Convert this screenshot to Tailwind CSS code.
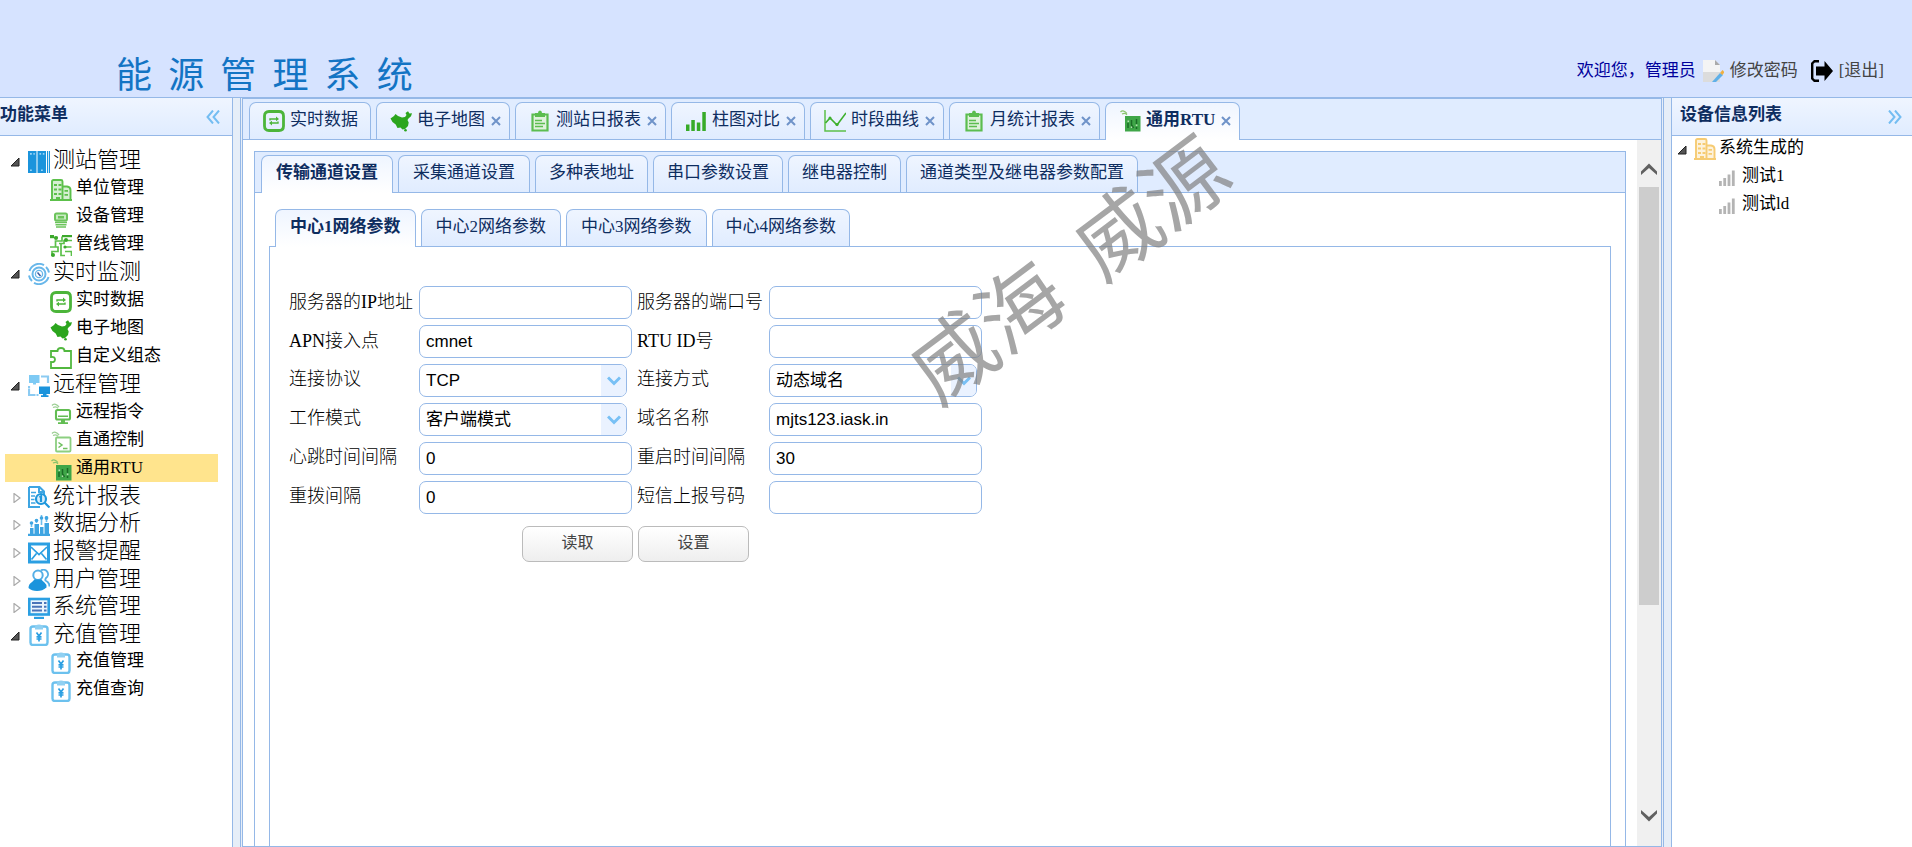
<!DOCTYPE html>
<html lang="zh-CN">
<head>
<meta charset="utf-8">
<title>能源管理系统</title>
<script src="https://cdn.jsdelivr.net/npm/@tailwindcss/browser@4"></script>
</head>
<body class="font-['Liberation_Serif','Noto_Sans_CJK_SC',serif] text-[17px] leading-[28px] text-black bg-white">

<svg class="hidden" aria-hidden="true">
  <symbol id="i-books" viewBox="0 0 22 22"><path fill="#1b94dc" d="M0 0h8.500v22H0zM9.500 0H18v22H9.500zM19 0h1v22h-1zM20.800 0H22v22h-1.200z"/><path fill="#9ad4f6" d="M2 2h1.800v1.800H2zM5.400 2h1.400v1.800H5.400zM2 18.500h1.800v1.500H2zM11.500 2h1.600v1.800h-1.600zM14.800 2h1.600v1.800h-1.600zM13 18.500h1.800v1.500H13z"/></symbol>
  <symbol id="i-building" viewBox="0 0 22 22"><path fill="currentColor" fill-opacity=".25" d="M2 1h10.500v20H2zM12.500 7.500h8V21h-8z"/><g fill="none" stroke="currentColor" stroke-width="1.900"><path d="M2 21V2.500Q2 1 3.500 1H11Q12.500 1 12.500 2.500V21M12.500 7.500H17Q20.500 8 20.500 11V21M0 21h22"/></g><path fill="currentColor" d="M4 5h3v2H4zM8.500 5h3v2h-3zM4 9.500h3v2H4zM8.500 9.500h3v2h-3zM4 14h3v2H4zM8.500 14h3v2h-3zM14.500 11h3.500v1.800h-3.500zM14.500 15h3.500v1.800h-3.500zM6 18h4v3H6z"/></symbol>
  <symbol id="i-device" viewBox="0 0 22 22"><rect x="5" y="6.500" width="12" height="7" rx="1.500" fill="#c9ebc2" stroke="#6cc45c" stroke-width="2"/><path fill="#6cc45c" d="M8 9h6v2.500H8zM5 14.600h12v1.700H5zM5.500 17h11v1.600h-11zM6 19.200h10v1.500H6z"/></symbol>
  <symbol id="i-pipe" viewBox="0 0 22 22"><g fill="none" stroke="#5cc04a" stroke-width="1.700"><path d="M0 2.500h8M12 1.500h10M12 1.500V6H5.500v6M9 8.500h5v-3h8M0 12h8v4.500H2V21M11 9v11.500h4M14 12h7.500M15 16.500h6.500V21"/></g><g fill="#3ca82c"><circle cx="6" cy="3" r="2"/><circle cx="16" cy="5" r="2"/><circle cx="3" cy="20" r="2"/><circle cx="15" cy="12" r="1.600"/><path d="M12 0h10v2H12zM0 0h4v3H0z"/></g></symbol>
  <symbol id="i-monitor" viewBox="0 0 22 22"><g fill="none" stroke="#68b7ea"><circle cx="11" cy="11" r="6.500" stroke-width="2"/><circle cx="11" cy="11" r="3.600" stroke-width="1.300"/><path stroke-width="2" d="M1.500 8A10 10 0 0 1 16 2.200M20.500 14A10 10 0 0 1 6 19.800M1 12.500a10 10 0 0 0 3 5.500M21 9.500A10 10 0 0 0 18 4"/></g><path d="M9.500 9.500l3 3.500" stroke="#3d5b9e" stroke-width="1.500"/></symbol>
  <symbol id="i-data" viewBox="0 0 22 22"><path d="M6 1.500h10q4.500 0 4.500 4.500v10q0 4.500-4.500 4.500H6q-4.500 0-4.500-4.500V6Q1.500 1.500 6 1.500z" fill="none" stroke="#4cb53a" stroke-width="2.800" stroke-linejoin="round"/><g fill="none" stroke="#4cb53a" stroke-width="1.400"><path d="M7 10.500V9h7M15 11.500V13H8"/></g><path fill="#4cb53a" d="M13 6.500l3 2.500-3 2.300zM9 10.700V15.500L6 13z"/></symbol>
  <symbol id="i-map" viewBox="0 0 22 22"><path fill="#2ba51d" d="M.5 8.500L4 6l1.500-2L8 6l4 1.500 3-.5 1.500-2L15.500 3 18 1.200l1.500 2.300 2.500-.3-1 3-2.500 2.300-1 1.500 1.200 2.500-.7 3.500-3 3-2.500.5-2-2-3 .5-1.800-3.500L2.500 12z"/><circle cx="15.500" cy="20.300" r="1.300" fill="#2ba51d"/></symbol>
  <symbol id="i-puzzle" viewBox="0 0 22 22"><path d="M1 4h6.500Q7.500 1 11 1t3.500 3H21v17H1v-6q4 .5 4-2.500T1 10z" fill="none" stroke="#52b83f" stroke-width="1.800"/></symbol>
  <symbol id="i-remote" viewBox="0 0 22 22"><path fill="#7ecaf4" d="M1 0h10.500v8H1zM5 8h3v1.500H5z"/><path fill="#1b94dc" d="M11 11.500h11V19H11zM15 19h3.500v1.300H15zM13 20.300h7.500V22H13z"/><path d="M13 1.500h7V8M1 13.500V20h6.500M1 11v2M8.500 20h2" fill="none" stroke="#8ccbf2" stroke-width="2.200"/></symbol>
  <symbol id="i-cmd" viewBox="0 0 22 22"><path d="M2 2.500c2-2.500 5-1 7 1.500M3 4.500c2-1 4-.5 5 .8" fill="none" stroke="#9ccf94" stroke-width="1.300"/><rect x="6" y="7" width="14" height="9.500" rx="1.500" fill="none" stroke="#62bd52" stroke-width="2.100"/><path fill="#62bd52" d="M11 16.500h4v3h-4zM8 19.200h10v1.800H8zM8 12.500h10V14H8z"/></symbol>
  <symbol id="i-term" viewBox="0 0 22 22"><path d="M2 2.500c2-2.500 5-1 7 1.500M3 4.500c2-1 4-.5 5 .8" fill="none" stroke="#9ccf94" stroke-width="1.300"/><rect x="6" y="6.500" width="14.500" height="14" rx="1" fill="none" stroke="#8ccf80" stroke-width="1.800"/><path d="M8.500 11.500l3.500 2.500-3.500 2.500M13 17.500h4.500" fill="none" stroke="#6fc060" stroke-width="1.500"/></symbol>
  <symbol id="i-rtu" viewBox="0 0 22 22"><path d="M1.500 2c2-2 4.500-1 6.500 1.500M3 4c2-1 4-.5 5 .8" fill="none" stroke="#8ac46c" stroke-width="1.200"/><path fill="#3fa648" d="M6 6h15.500v15.500H6z"/><path d="M9 18v-5M12.500 10v5l2 3M17.500 9v5M17.500 17v2" stroke="#1b6b26" stroke-width="1.500" fill="none"/><path fill="#b5e0b0" d="M8.500 10.500h1.600v1.600H8.500zM11.800 16.500h1.400V18h-1.400zM16.800 14.500h1.600V16h-1.600z"/></symbol>
  <symbol id="i-report" viewBox="0 0 22 22"><path d="M1 1h10.500L16 5.500V9M1 1v20h11M11 1v5h5" fill="none" stroke="#3ea5e2" stroke-width="2"/><path d="M3 6.500h5M3 10h4M3 13.500h3.500M3 17h4.500" stroke="#3ea5e2" stroke-width="1.600"/><circle cx="13" cy="13" r="5" fill="#d7eefb" stroke="#1f97dc" stroke-width="2.200"/><path d="M11.500 11.500l1.500-1.200V16M16.500 16.500l5 5" stroke="#1f97dc" stroke-width="2.200" fill="none"/></symbol>
  <symbol id="i-analysis" viewBox="0 0 22 22"><path fill="#3ea5e2" d="M2 14h3.500v6H2zM6.500 10H11v10H6.500zM12 13h3.500v7H12zM16.500 9H21v11h-4.500zM0 19.800h22V22H0z"/><path d="M3.500 8v5M8.500 5v4M13.500 1v10M18.500 2v6" stroke="#6cbdec" stroke-width="1.600"/><g fill="#3ea5e2"><circle cx="3.500" cy="9" r="1.800"/><circle cx="8.500" cy="6.500" r="1.800"/><circle cx="13.500" cy="4" r="1.800"/><circle cx="18.500" cy="4" r="1.900"/></g></symbol>
  <symbol id="i-mail" viewBox="0 0 22 22"><rect x="1.500" y="2" width="19" height="18" fill="#fff" stroke="#2b9fe2" stroke-width="3"/><path d="M3 5l8 7.500L19 5M3.500 17.500l5-6M18.500 17.500l-5-6" fill="none" stroke="#2b9fe2" stroke-width="1.700"/></symbol>
  <symbol id="i-user" viewBox="0 0 22 22"><path d="M13 1.500a4.500 4.500 0 0 1 5 7.500q-1 1.500-.5 2.500 4 2 4 6" fill="none" stroke="#55afe6" stroke-width="1.900"/><circle cx="10" cy="6.200" r="4.700" fill="#fff" stroke="#55afe6" stroke-width="2"/><path fill="#1b94dc" d="M6.500 10.500h7q1 1.500 3 3 2.500 2 2 5-4 3.500-9.500 3.500T.500 19q0-4 3.500-6z"/></symbol>
  <symbol id="i-system" viewBox="0 0 22 22"><rect x="1.300" y="2" width="19.400" height="15.500" fill="#eaf5fd" stroke="#2b9fe2" stroke-width="2.600"/><path d="M4 6h10M4 9.700h10M4 13.400h10M16 6h2.500M16 9.700h2.500M16 13.400h2.500" stroke="#4a74b8" stroke-width="2"/><path fill="#2b9fe2" d="M6 19.800h10V22H6z"/></symbol>
  <symbol id="i-pay" viewBox="0 0 22 22"><rect x="2.500" y="2.500" width="17" height="18.500" rx="2.500" fill="none" stroke="#6cc1ee" stroke-width="2.400"/><path fill="#8fd0f2" d="M7 3Q7 .5 11 .5T15 3v2.500H7z"/><path d="M8.500 8.500L11 12l2.500-3.500M11 12v5.500M8.500 12.800h5M8.500 15h5" fill="none" stroke="#2b9fe2" stroke-width="1.700"/></symbol>
  <symbol id="i-clip" viewBox="0 0 22 22"><path d="M3.500 4.500h15v16h-15z" fill="#dff2dc" stroke="#5cbd50" stroke-width="2.200"/><path fill="#5cbd50" d="M6 3h3q0-2.500 2-2.500T13 3h3v4H6z"/><path d="M6 10.500h7M6 13.500h10M6 16.500h8" stroke="#5cbd50" stroke-width="1.400"/></symbol>
  <symbol id="i-bars" viewBox="0 0 22 22"><path fill="#37ab28" d="M1 14.500h3.500V21H1zM6.300 10h3.500v11H6.300zM11.800 12.500h3.500V21h-3.500zM17.300 2h3.500v19h-3.500z"/></symbol>
  <symbol id="i-line" viewBox="0 0 22 22"><path d="M1 0v21h21" fill="none" stroke="#5cc04a" stroke-width="1.500"/><path d="M1.500 13L6 8l7 7L22 3" fill="none" stroke="#3fb02e" stroke-width="1.600"/><circle cx="6" cy="8" r="1.500" fill="#3fb02e"/><circle cx="13" cy="14.500" r="1.600" fill="#3fb02e"/></symbol>
  <symbol id="i-signal" viewBox="0 0 22 22"><path fill="#b4b4b4" d="M3 16h2.800v5H3zM7.300 13h2.800v8H7.300zM11.600 9.500h2.800V21h-2.800zM15.900 5.500h2.800V21h-2.800z"/></symbol>
  <symbol id="i-open" viewBox="0 0 10 10"><path d="M9 1v8H1z" fill="#555" stroke="#222" stroke-width="1"/></symbol>
  <symbol id="i-shut" viewBox="0 0 10 10"><path d="M2 .5L8 5 2 9.500z" fill="#fff" stroke="#aaa" stroke-width="1.200"/></symbol>
  <symbol id="i-x" viewBox="0 0 10 10"><path d="M1 1l8 8M9 1L1 9" stroke="#6f93c9" stroke-width="2"/></symbol>
  <symbol id="i-left" viewBox="0 0 14 14"><path d="M7 .5L1.500 7 7 13.500M13 .5L7.500 7 13 13.500" fill="none" stroke="#74bdf2" stroke-width="2"/></symbol>
  <symbol id="i-right" viewBox="0 0 14 14"><path d="M1 .5L6.500 7 1 13.500M7 .5L12.500 7 7 13.500" fill="none" stroke="#74bdf2" stroke-width="2"/></symbol>
  <symbol id="i-chev" viewBox="0 0 14 10"><path d="M1 1.500l6 6 6-6" fill="none" stroke="#78c0f5" stroke-width="3"/></symbol>
</svg>

<div class="h-screen flex flex-col overflow-hidden relative">
  <header class="h-[97px] shrink-0 bg-[#d6e3ff] flex justify-between">
    <h1 class="pl-[116px] pt-[48px] font-['Noto_Sans_CJK_SC',sans-serif] text-[36px] leading-[48px] text-[#1374c4] whitespace-pre">能  源  管  理  系  统</h1>
    <div class="flex items-center pt-[46px] h-[96px] pr-[28px] text-[#444]">
      <span class="text-[#00009c]">欢迎您，管理员</span>
      <a href="#" class="flex items-center ml-[6px]"><svg class="size-[22px] mr-[6px]" viewBox="0 0 22 22"><path d="M1 0h12l5 5v17H1z" fill="#f4f4f4"/><path d="M1 12h17v10H1z" fill="#dcdcdc"/><path d="M13 0l5 5h-5z" fill="#aaa"/><path d="M10 22l8-9 3 2-7 7z" fill="#5fb0e8"/><path d="M18 13l2.500-3L22.500 12l-2 3z" fill="#f0b040"/></svg>修改密码</a>
      <a href="#" class="flex items-center ml-[13px]"><svg class="size-[22px] mr-[6px]" viewBox="0 0 22 22"><path d="M8 1.200H3.500L1.200 3.500v15l2.300 2.300H8" fill="none" stroke="#000" stroke-width="2.400"/><path d="M5 6.500h8.500V1L22 11l-8.500 10v-5.500H5z" fill="#000"/></svg>[退出]</a>
    </div>
  </header>

  <div class="flex-1 min-h-0 flex bg-[#e6eef8] border-t border-[#95b8e7]">
    <aside class="w-[233px] shrink-0 bg-white border-r border-[#95b8e7]">
      <div class="h-[38px] flex items-center justify-between pr-[12px] border-b border-[#95b8e7] bg-gradient-to-b from-[#eff5ff] to-[#e0ecff] text-[#0e2d5f] font-bold">
        <h2 class="pb-[4px]">功能菜单</h2>
        <button aria-label="折叠"><svg class="size-[14px]"><use href="#i-left"/></svg></button>
      </div>
      <nav class="pt-[10px]">
        <ul>
          <li><a href="#" class="flex h-[28px] items-center pl-[10px] text-[22px] font-light"><svg class="size-[10px] mr-[8px] mt-[4px]"><use href="#i-open"/></svg><svg class="size-[22px] mr-[3px] self-end mb-px"><use href="#i-books"/></svg>测站管理</a>
            <ul>
              <li><a href="#" class="flex h-[28px] items-center pl-[50px]"><svg class="size-[22px] mr-[4px] self-end mb-px text-[#5cc04a]"><use href="#i-building"/></svg>单位管理</a></li>
              <li><a href="#" class="flex h-[28px] items-center pl-[50px]"><svg class="size-[22px] mr-[4px] self-end mb-px"><use href="#i-device"/></svg>设备管理</a></li>
              <li><a href="#" class="flex h-[28px] items-center pl-[50px]"><svg class="size-[22px] mr-[4px] self-end mb-px"><use href="#i-pipe"/></svg>管线管理</a></li>
            </ul></li>
          <li><a href="#" class="flex h-[28px] items-center pl-[10px] text-[22px] font-light"><svg class="size-[10px] mr-[8px] mt-[4px]"><use href="#i-open"/></svg><svg class="size-[22px] mr-[3px] self-end mb-px"><use href="#i-monitor"/></svg>实时监测</a>
            <ul>
              <li><a href="#" class="flex h-[28px] items-center pl-[50px]"><svg class="size-[22px] mr-[4px] self-end mb-px"><use href="#i-data"/></svg>实时数据</a></li>
              <li><a href="#" class="flex h-[28px] items-center pl-[50px]"><svg class="size-[22px] mr-[4px] self-end mb-px"><use href="#i-map"/></svg>电子地图</a></li>
              <li><a href="#" class="flex h-[28px] items-center pl-[50px]"><svg class="size-[22px] mr-[4px] self-end mb-px"><use href="#i-puzzle"/></svg>自定义组态</a></li>
            </ul></li>
          <li><a href="#" class="flex h-[28px] items-center pl-[10px] text-[22px] font-light"><svg class="size-[10px] mr-[8px] mt-[4px]"><use href="#i-open"/></svg><svg class="size-[22px] mr-[3px] self-end mb-px"><use href="#i-remote"/></svg>远程管理</a>
            <ul>
              <li><a href="#" class="flex h-[28px] items-center pl-[50px]"><svg class="size-[22px] mr-[4px] self-end mb-px"><use href="#i-cmd"/></svg>远程指令</a></li>
              <li><a href="#" class="flex h-[28px] items-center pl-[50px]"><svg class="size-[22px] mr-[4px] self-end mb-px"><use href="#i-term"/></svg>直通控制</a></li>
              <li><a href="#" aria-current="page" class="flex h-[28px] items-center ml-[5px] mr-[14px] pl-[45px] bg-[#ffe48d]"><svg class="size-[22px] mr-[4px] self-end mb-px"><use href="#i-rtu"/></svg>通用RTU</a></li>
            </ul></li>
          <li><a href="#" class="flex h-[27px] items-center pl-[12px] text-[22px] font-light"><svg class="size-[10px] mr-[6px] mt-[4px]"><use href="#i-shut"/></svg><svg class="size-[22px] mr-[3px] self-end mb-px"><use href="#i-report"/></svg>统计报表</a></li>
          <li><a href="#" class="flex h-[28px] items-center pl-[12px] text-[22px] font-light"><svg class="size-[10px] mr-[6px] mt-[4px]"><use href="#i-shut"/></svg><svg class="size-[22px] mr-[3px] self-end mb-px"><use href="#i-analysis"/></svg>数据分析</a></li>
          <li><a href="#" class="flex h-[28px] items-center pl-[12px] text-[22px] font-light"><svg class="size-[10px] mr-[6px] mt-[4px]"><use href="#i-shut"/></svg><svg class="size-[22px] mr-[3px] self-end mb-px"><use href="#i-mail"/></svg>报警提醒</a></li>
          <li><a href="#" class="flex h-[27px] items-center pl-[12px] text-[22px] font-light"><svg class="size-[10px] mr-[6px] mt-[4px]"><use href="#i-shut"/></svg><svg class="size-[22px] mr-[3px] self-end mb-px"><use href="#i-user"/></svg>用户管理</a></li>
          <li><a href="#" class="flex h-[28px] items-center pl-[12px] text-[22px] font-light"><svg class="size-[10px] mr-[6px] mt-[4px]"><use href="#i-shut"/></svg><svg class="size-[22px] mr-[3px] self-end mb-px"><use href="#i-system"/></svg>系统管理</a></li>
          <li><a href="#" class="flex h-[27px] items-center pl-[10px] text-[22px] font-light"><svg class="size-[10px] mr-[8px] mt-[4px]"><use href="#i-open"/></svg><svg class="size-[22px] mr-[3px] self-end mb-px"><use href="#i-pay"/></svg>充值管理</a>
            <ul>
              <li><a href="#" class="flex h-[28px] items-center pl-[50px]"><svg class="size-[22px] mr-[4px] self-end mb-px"><use href="#i-pay"/></svg>充值管理</a></li>
              <li><a href="#" class="flex h-[28px] items-center pl-[50px]"><svg class="size-[22px] mr-[4px] self-end mb-px"><use href="#i-pay"/></svg>充值查询</a></li>
            </ul></li>
        </ul>
      </nav>
    </aside>

    <main class="flex-1 min-w-0 ml-[7px] mr-[7px] border-x border-[#95b8e7] pl-px pr-px flex">
     <div class="flex-1 min-w-0 flex flex-col border border-[#95b8e7] bg-white">
      <div role="tablist" class="h-[41px] shrink-0 flex items-end gap-[5px] pl-[6px] bg-[#e0ecff] border-b border-[#95b8e7] text-[#0e2d5f]">
        <div class="flex h-[37px] items-center pl-[13px] pr-[12px] rounded-t-[7px] border border-b-0 border-[#95b8e7] bg-gradient-to-b from-[#eff5ff] to-[#e0ecff]"><svg class="size-[22px] mr-[5px]"><use href="#i-data"/></svg><button role="tab" class="pb-[3px]">实时数据</button></div>
        <div class="flex h-[37px] items-center pl-[13px] pr-[8px] rounded-t-[7px] border border-b-0 border-[#95b8e7] bg-gradient-to-b from-[#eff5ff] to-[#e0ecff]"><svg class="size-[22px] mr-[5px]"><use href="#i-map"/></svg><button role="tab" class="pb-[3px]">电子地图</button><button aria-label="关闭" class="ml-[6px]"><svg class="size-[10px]"><use href="#i-x"/></svg></button></div>
        <div class="flex h-[37px] items-center pl-[13px] pr-[8px] rounded-t-[7px] border border-b-0 border-[#95b8e7] bg-gradient-to-b from-[#eff5ff] to-[#e0ecff]"><svg class="size-[22px] mr-[5px]"><use href="#i-clip"/></svg><button role="tab" class="pb-[3px]">测站日报表</button><button aria-label="关闭" class="ml-[6px]"><svg class="size-[10px]"><use href="#i-x"/></svg></button></div>
        <div class="flex h-[37px] items-center pl-[13px] pr-[8px] rounded-t-[7px] border border-b-0 border-[#95b8e7] bg-gradient-to-b from-[#eff5ff] to-[#e0ecff]"><svg class="size-[22px] mr-[5px]"><use href="#i-bars"/></svg><button role="tab" class="pb-[3px]">柱图对比</button><button aria-label="关闭" class="ml-[6px]"><svg class="size-[10px]"><use href="#i-x"/></svg></button></div>
        <div class="flex h-[37px] items-center pl-[13px] pr-[8px] rounded-t-[7px] border border-b-0 border-[#95b8e7] bg-gradient-to-b from-[#eff5ff] to-[#e0ecff]"><svg class="size-[22px] mr-[5px]"><use href="#i-line"/></svg><button role="tab" class="pb-[3px]">时段曲线</button><button aria-label="关闭" class="ml-[6px]"><svg class="size-[10px]"><use href="#i-x"/></svg></button></div>
        <div class="flex h-[37px] items-center pl-[13px] pr-[8px] rounded-t-[7px] border border-b-0 border-[#95b8e7] bg-gradient-to-b from-[#eff5ff] to-[#e0ecff]"><svg class="size-[22px] mr-[5px]"><use href="#i-clip"/></svg><button role="tab" class="pb-[3px]">月统计报表</button><button aria-label="关闭" class="ml-[6px]"><svg class="size-[10px]"><use href="#i-x"/></svg></button></div>
        <div class="flex h-[38px] -mb-px pb-px items-center pl-[13px] pr-[8px] rounded-t-[7px] border border-b-0 border-[#95b8e7] bg-gradient-to-b from-[#eff5ff] to-white"><svg class="size-[22px] mr-[5px]"><use href="#i-rtu"/></svg><button role="tab" aria-selected="true" class="pb-[3px] font-bold">通用RTU</button><button aria-label="关闭" class="ml-[6px]"><svg class="size-[10px]"><use href="#i-x"/></svg></button></div>
      </div>

      <div class="flex-1 min-h-0 flex">
        <div class="flex-1 min-w-0 flex flex-col pt-[11px] pl-[11px] pr-[11px]">
          <div role="tablist" class="h-[42px] shrink-0 flex items-end gap-[5px] pl-[6px] bg-[#e0ecff] border border-[#95b8e7] text-[#0e2d5f]">
            <button role="tab" aria-selected="true" class="h-[38px] -mb-px pb-[4px] px-[14px] font-bold rounded-t-[7px] border border-b-0 border-[#95b8e7] bg-gradient-to-b from-[#eff5ff] to-white">传输通道设置</button>
            <button role="tab" class="h-[37px] pb-[3px] px-[14px] rounded-t-[7px] border border-b-0 border-[#95b8e7] bg-gradient-to-b from-[#eff5ff] to-[#e0ecff]">采集通道设置</button>
            <button role="tab" class="h-[37px] pb-[3px] px-[13px] rounded-t-[7px] border border-b-0 border-[#95b8e7] bg-gradient-to-b from-[#eff5ff] to-[#e0ecff]">多种表地址</button>
            <button role="tab" class="h-[37px] pb-[3px] px-[13px] rounded-t-[7px] border border-b-0 border-[#95b8e7] bg-gradient-to-b from-[#eff5ff] to-[#e0ecff]">串口参数设置</button>
            <button role="tab" class="h-[37px] pb-[3px] px-[13px] rounded-t-[7px] border border-b-0 border-[#95b8e7] bg-gradient-to-b from-[#eff5ff] to-[#e0ecff]">继电器控制</button>
            <button role="tab" class="h-[37px] pb-[3px] px-[13px] rounded-t-[7px] border border-b-0 border-[#95b8e7] bg-gradient-to-b from-[#eff5ff] to-[#e0ecff]">通道类型及继电器参数配置</button>
          </div>
          <div class="flex-1 min-h-0 flex flex-col border-x border-[#95b8e7] px-[14px] pt-[16px]">
            <div role="tablist" class="h-[38px] shrink-0 flex items-end gap-[5px] pl-[6px] border-b border-[#95b8e7] text-[#0e2d5f]">
              <button role="tab" aria-selected="true" class="h-[38px] -mb-px pb-[4px] px-[14px] font-bold rounded-t-[7px] border border-b-0 border-[#95b8e7] bg-gradient-to-b from-[#eff5ff] to-white">中心1网络参数</button>
              <button role="tab" class="h-[37px] pb-[3px] px-[14px] rounded-t-[7px] border border-b-0 border-[#95b8e7] bg-gradient-to-b from-[#eff5ff] to-[#e0ecff]">中心2网络参数</button>
              <button role="tab" class="h-[37px] pb-[3px] px-[14px] rounded-t-[7px] border border-b-0 border-[#95b8e7] bg-gradient-to-b from-[#eff5ff] to-[#e0ecff]">中心3网络参数</button>
              <button role="tab" class="h-[37px] pb-[3px] px-[13px] rounded-t-[7px] border border-b-0 border-[#95b8e7] bg-gradient-to-b from-[#eff5ff] to-[#e0ecff]">中心4网络参数</button>
            </div>
            <form class="flex-1 min-h-0 border-x border-[#95b8e7] pl-[19px] pt-[39px]">
              <div class="grid grid-cols-[125px_213px_127px_213px] gap-x-[5px] gap-y-[6px] items-center text-[18px]">
                <label for="ip" class="pb-[2px] whitespace-nowrap font-light">服务器的IP地址</label>
                <input id="ip" class="h-[33px] w-full rounded-[7px] border border-[#95b8e7] px-[6px] text-[17px] font-['Liberation_Sans','Noto_Sans_CJK_SC',sans-serif]">
                <label for="port" class="pb-[2px] whitespace-nowrap font-light">服务器的端口号</label>
                <input id="port" class="h-[33px] w-full rounded-[7px] border border-[#95b8e7] px-[6px] text-[17px] font-['Liberation_Sans','Noto_Sans_CJK_SC',sans-serif]">
                <label for="apn" class="pb-[2px] font-light">APN接入点</label>
                <input id="apn" value="cmnet" class="h-[33px] w-full rounded-[7px] border border-[#95b8e7] px-[6px] text-[17px] font-['Liberation_Sans','Noto_Sans_CJK_SC',sans-serif]">
                <label for="rtu" class="pb-[2px] font-light">RTU ID号</label>
                <input id="rtu" class="h-[33px] w-full rounded-[7px] border border-[#95b8e7] px-[6px] text-[17px] font-['Liberation_Sans','Noto_Sans_CJK_SC',sans-serif]">
                <label for="proto" class="pb-[4px] font-light">连接协议</label>
                <div class="relative h-[33px] w-[208px]"><select id="proto" class="appearance-none h-full w-full rounded-[7px] border border-[#95b8e7] px-[6px] text-[17px] leading-[24px] font-['Liberation_Sans','Noto_Sans_CJK_SC',sans-serif]"><option>TCP</option></select><span class="absolute right-px inset-y-px w-[25px] rounded-r-[6px] bg-[#eaf2ff] flex items-center justify-center pointer-events-none"><svg class="w-[14px] h-[10px]"><use href="#i-chev"/></svg></span></div>
                <label for="conn" class="pb-[4px] font-light">连接方式</label>
                <div class="relative h-[33px] w-[208px]"><select id="conn" class="appearance-none h-full w-full rounded-[7px] border border-[#95b8e7] px-[6px] text-[17px] leading-[24px] font-['Liberation_Sans','Noto_Sans_CJK_SC',sans-serif]"><option>动态域名</option></select><span class="absolute right-px inset-y-px w-[25px] rounded-r-[6px] bg-[#eaf2ff] flex items-center justify-center pointer-events-none"><svg class="w-[14px] h-[10px]"><use href="#i-chev"/></svg></span></div>
                <label for="mode" class="pb-[4px] font-light">工作模式</label>
                <div class="relative h-[33px] w-[208px]"><select id="mode" class="appearance-none h-full w-full rounded-[7px] border border-[#95b8e7] px-[6px] text-[17px] leading-[24px] font-['Liberation_Sans','Noto_Sans_CJK_SC',sans-serif]"><option>客户端模式</option></select><span class="absolute right-px inset-y-px w-[25px] rounded-r-[6px] bg-[#eaf2ff] flex items-center justify-center pointer-events-none"><svg class="w-[14px] h-[10px]"><use href="#i-chev"/></svg></span></div>
                <label for="domain" class="pb-[4px] font-light">域名名称</label>
                <input id="domain" value="mjts123.iask.in" class="h-[33px] w-full rounded-[7px] border border-[#95b8e7] px-[6px] text-[17px] font-['Liberation_Sans','Noto_Sans_CJK_SC',sans-serif]">
                <label for="beat" class="pb-[4px] font-light">心跳时间间隔</label>
                <input id="beat" value="0" class="h-[33px] w-full rounded-[7px] border border-[#95b8e7] px-[6px] text-[17px] font-['Liberation_Sans','Noto_Sans_CJK_SC',sans-serif]">
                <label for="reboot" class="pb-[4px] font-light">重启时间间隔</label>
                <input id="reboot" value="30" class="h-[33px] w-full rounded-[7px] border border-[#95b8e7] px-[6px] text-[17px] font-['Liberation_Sans','Noto_Sans_CJK_SC',sans-serif]">
                <label for="redial" class="pb-[4px] font-light">重拨间隔</label>
                <input id="redial" value="0" class="h-[33px] w-full rounded-[7px] border border-[#95b8e7] px-[6px] text-[17px] font-['Liberation_Sans','Noto_Sans_CJK_SC',sans-serif]">
                <label for="sms" class="pb-[4px] font-light">短信上报号码</label>
                <input id="sms" class="h-[33px] w-full rounded-[7px] border border-[#95b8e7] px-[6px] text-[17px] font-['Liberation_Sans','Noto_Sans_CJK_SC',sans-serif]">
              </div>
              <div class="flex gap-[5px] mt-[12px] pl-[233px] text-[16px] text-[#444]">
                <button type="button" class="w-[111px] h-[36px] pb-[3px] rounded-[7px] border border-[#bbb] bg-gradient-to-b from-white to-[#eee]">读取</button>
                <button type="button" class="w-[111px] h-[36px] pb-[3px] rounded-[7px] border border-[#bbb] bg-gradient-to-b from-white to-[#eee]">设置</button>
              </div>
            </form>
          </div>
        </div>
        <div class="w-[24px] shrink-0 bg-[#f0f0f0] flex flex-col items-center pt-[23px] pb-[24px]" aria-hidden="true">
          <svg class="w-[16px] h-[12px] shrink-0" viewBox="0 0 16 12"><path d="M0 12V8.500L8 .5l8 8V12L8 5z" fill="#606060"/></svg>
          <div class="w-[20px] h-[418px] mt-[12px] bg-[#cdcdcd]"></div>
          <svg class="w-[16px] h-[12px] shrink-0 mt-auto" viewBox="0 0 16 12"><path d="M0 0v3.500l8 8 8-8V0L8 7z" fill="#606060"/></svg>
        </div>
      </div>
     </div>
    </main>

    <aside class="w-[241px] shrink-0 bg-white border-l border-[#95b8e7]">
      <div class="h-[38px] flex items-center justify-between pl-[8px] pr-[10px] border-b border-[#95b8e7] bg-gradient-to-b from-[#eff5ff] to-[#e0ecff] text-[#0e2d5f] font-bold">
        <h2 class="pb-[4px]">设备信息列表</h2>
        <button aria-label="折叠"><svg class="size-[14px]"><use href="#i-right"/></svg></button>
      </div>
      <ul>
        <li><a href="#" class="flex h-[28px] items-center pl-[5px] pb-[5px]"><svg class="size-[10px] mr-[7px] mt-[4px]"><use href="#i-open"/></svg><svg class="size-[22px] mr-[3px] mt-[2px] text-[#f6cb72]"><use href="#i-building"/></svg>系统生成的</a>
          <ul>
            <li><a href="#" class="flex h-[28px] items-center pl-[44px] pb-[5px]"><svg class="size-[22px] mr-[4px]"><use href="#i-signal"/></svg>测试1</a></li>
            <li><a href="#" class="flex h-[28px] items-center pl-[44px] pb-[5px]"><svg class="size-[22px] mr-[4px]"><use href="#i-signal"/></svg>测试ld</a></li>
          </ul></li>
      </ul>
    </aside>
  </div>

  <div class="absolute left-[1066px] top-[266px] -translate-x-1/2 -translate-y-1/2 -rotate-37 whitespace-pre pointer-events-none font-['Noto_Sans_CJK_SC',sans-serif] text-[84px] leading-[84px] text-[#808080]/70">威海  威源</div>
</div>
</body>
</html>
